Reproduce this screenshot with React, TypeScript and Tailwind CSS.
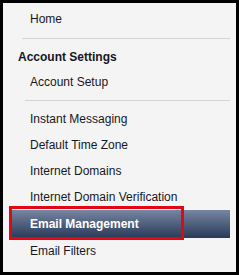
const items = [
  "Instant Messaging",
  "Default Time Zone",
  "Internet Domains",
  "Internet Domain Verification",
];

const Row = ({ label }: { label: string }) => (
  <div className="h-[26px] flex items-center pl-[27px] text-[12px] text-[#141726]">{label}</div>
);

export default function App() {
  return (
    <div
      className="w-[239px] h-[275px] border-[3px] border-black bg-[#f4f4f4] flex flex-col"
      style={{ fontFamily: '"Liberation Sans", Arial, sans-serif' }}
    >
      <div className="mt-[3px]">
        <Row label="Home" />
      </div>
      <div className="mt-[6px] ml-[19px] mr-[6px] h-px bg-[#d3d3d3]" />
      <div className="mt-[5px] h-[25px] flex items-center pl-[15px] text-[12px] font-bold text-[#141726]">
        Account Settings
      </div>
      <Row label="Account Setup" />
      <div className="mt-[5px] ml-[22px] mr-[6px] h-px bg-[#d3d3d3]" />
      <div className="mt-[5px]">
        {items.map((label) => (
          <Row key={label} label={label} />
        ))}
      </div>
      <div className="relative ml-[7px] mr-[6px] h-[28px] flex items-center pl-[20px] text-[12px] font-bold text-white bg-gradient-to-b from-[#7786a2] to-[#2a3b59]">
        Email Management
        <div className="absolute -left-[1px] -top-[4px] w-[175px] h-[34px] border-[3px] border-[#e30613]" />
      </div>
      <Row label="Email Filters" />
    </div>
  );
}
